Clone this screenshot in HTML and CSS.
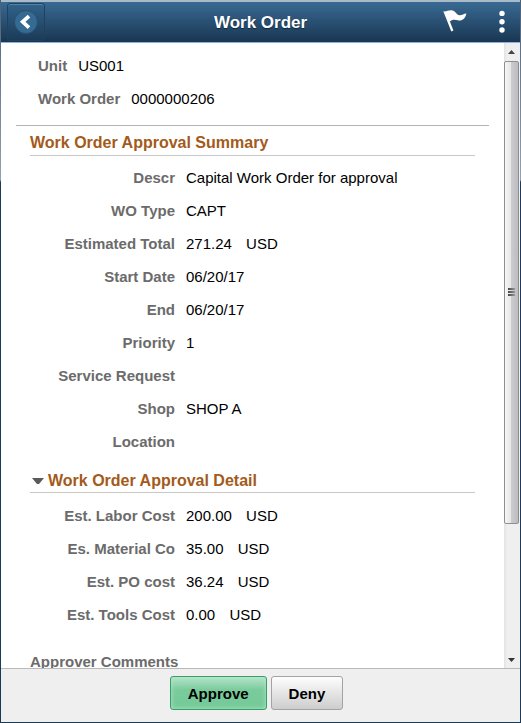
FILE: index.html
```
<!DOCTYPE html>
<html lang="en">
<head>
<meta charset="utf-8">
<meta name="viewport" content="width=device-width, initial-scale=1">
<title>Work Order</title>
<link rel="stylesheet" href="styles.css">
</head>
<body>
<div class="window">
  <header class="banner">
    <button type="button" class="back" aria-label="Back">
      <svg width="24" height="24" viewBox="0 0 24 24">
        <circle cx="12" cy="12" r="11.5" fill="#356a92" stroke="#28516f"/>
        <path d="M15 6.2L8.7 11.8L15 17.6" fill="none" stroke="#fff" stroke-width="3.8"/>
      </svg>
    </button>
    <h1>Work Order</h1>
    <div class="tools">
      <button type="button" class="tool" aria-label="Notifications">
        <svg width="24" height="24" viewBox="0 0 24 24">
          <path d="M0.3 1.3C3.6 2 5.6 -0.4 9.6 0.6C13.3 1.8 13.4 5.2 16.6 5.2C19.3 5.3 20.5 3.4 23.4 3.4C22.5 8.2 19.2 10.9 15.8 10.4C12.3 9.8 9.3 8.8 6.9 11.5L10.4 20.6L8.3 21.4Z" fill="#fff"/>
        </svg>
      </button>
      <button type="button" class="tool" aria-label="Actions">
        <svg width="6" height="24" viewBox="0 0 6 24">
          <circle cx="3" cy="3.4" r="2.7" fill="#fff"/>
          <circle cx="3" cy="11.7" r="2.7" fill="#fff"/>
          <circle cx="3" cy="20" r="2.7" fill="#fff"/>
        </svg>
      </button>
    </div>
  </header>

  <div class="middle">
    <main class="content">
      <dl class="keys">
        <div><dt>Unit</dt><dd>US001</dd></div>
        <div><dt>Work Order</dt><dd>0000000206</dd></div>
      </dl>
      <section class="group">
        <h2>Work Order Approval Summary</h2>
        <dl class="fields">
          <dt>Descr</dt><dd>Capital Work Order for approval</dd>
          <dt>WO Type</dt><dd>CAPT</dd>
          <dt>Estimated Total</dt><dd>271.24 <span class="cur">USD</span></dd>
          <dt>Start Date</dt><dd>06/20/17</dd>
          <dt>End</dt><dd>06/20/17</dd>
          <dt>Priority</dt><dd>1</dd>
          <dt>Service Request</dt><dd></dd>
          <dt>Shop</dt><dd>SHOP A</dd>
          <dt>Location</dt><dd></dd>
        </dl>
      </section>
      <section class="group detail">
        <h2>
          <button type="button" class="toggle" aria-expanded="true">
            <svg width="12" height="6" viewBox="0 0 12 6"><path d="M0 0H12L7 6H5Z" fill="#5a5a5a"/></svg>
            Work Order Approval Detail
          </button>
        </h2>
        <dl class="fields">
          <dt>Est. Labor Cost</dt><dd>200.00 <span class="cur">USD</span></dd>
          <dt>Es. Material Co</dt><dd>35.00 <span class="cur">USD</span></dd>
          <dt>Est. PO cost</dt><dd>36.24 <span class="cur">USD</span></dd>
          <dt>Est. Tools Cost</dt><dd>0.00 <span class="cur">USD</span></dd>
        </dl>
        <dl class="fields comments">
          <dt>Approver Comments</dt><dd></dd>
        </dl>
      </section>
    </main>
    <div class="scroll" aria-hidden="true">
      <svg class="arrow" width="15" height="18" viewBox="0 0 15 18"><path d="M4 11H11L7.5 7Z" fill="#444"/></svg>
      <div class="thumb"><i></i><i></i><i></i></div>
      <div class="rest"></div>
      <svg class="arrow" width="15" height="18" viewBox="0 0 15 18"><path d="M4 8H11L7.5 12Z" fill="#333"/></svg>
    </div>
  </div>

  <footer class="actions">
    <button type="button" class="btn approve">Approve</button>
    <button type="button" class="btn">Deny</button>
  </footer>
</div>
</body>
</html>
```
FILE: styles.css
```
* { box-sizing:border-box;}
body { margin:0; font-family:"Liberation Sans", Arial, sans-serif; font-size:15px; color:#000;}
h1, h2, dl, dd { margin:0;}
button { font-family:inherit; cursor:pointer;}
svg { display:block;}

.window { display:flex; flex-direction:column; height:100vh; padding:0 1px 1px; background:linear-gradient(#4c6076, #93a1b0 180px, #1c3a55 182px);}

/* banner */
.banner { display:grid; grid-template-columns:1fr auto 1fr; align-items:center; height:43px; flex:none; padding:0 6px; border-top:2px solid #a9bac8; border-bottom:1px solid #8db2dc; background:linear-gradient(#396a93, #193652);}
.banner h1 { font-size:17px; line-height:20px; color:#fff; padding-top:2px; text-shadow:0 1px 1px #10263a;}
.back { display:flex; align-items:center; justify-content:center; width:38px; height:38px; padding:0; border:1px solid #1f4260; border-radius:3px; background:linear-gradient(#32628a, #1b3b58); box-shadow:inset 0 1px 0 #5383a8;}
.tools { display:flex; justify-content:flex-end; gap:32px; padding-right:9px;}
.tool { padding:0; border:none; background:none;}

/* page body */
.middle { display:flex; flex:1; min-height:0; background:#fff;}
.content { flex:1; overflow-y:auto; scrollbar-width:none; padding:6px 15px 0;}
dt { font-weight:bold; color:#6b6b6b;}
.keys { padding:0 22px 10px; border-bottom:1px solid #b5b5b5;}
.keys div { display:flex; gap:11px; line-height:33px;}
.group { padding:0 14px;}
.group h2 { padding:7px 0 2px; border-bottom:1px solid #c8c8c8; font-size:16px; line-height:20px; color:#a35a1a;}
.detail h2 { padding-top:13px; padding-bottom:1px;}
.toggle { display:flex; align-items:center; gap:4px; padding:0 0 0 2px; border:none; background:none; font-size:16px; font-weight:bold; line-height:20px; color:inherit;}
.fields { display:grid; grid-template-columns:145px 1fr; column-gap:11px; padding-top:5px; line-height:33px;}
.detail .fields { padding-top:6px;}
.fields dt { text-align:right; white-space:nowrap;}
.fields dt, .fields dd { min-height:33px;}
.cur { margin-left:10px;}
.detail .comments { padding-top:14px;}

/* scrollbar */
.scroll { display:flex; flex-direction:column; flex:none; width:16px; padding-right:1px; background:linear-gradient(90deg, #e3e3e3, #efefef 3px);}
.arrow { flex:none;}
.thumb { flex:463; display:flex; flex-direction:column; align-items:center; justify-content:center; gap:1px; border:1px solid #8f8f8f; border-radius:2px; background:linear-gradient(90deg, #f6f6f6, #e6e6e6 45%, #cbcbcf 50%, #bcbcc0);}
.thumb i { width:7px; height:2px; background:linear-gradient(90deg, #444, #999);}
.rest { flex:127;}

/* buttons at the bottom */
.actions { display:flex; flex:none; justify-content:center; gap:4px; padding:7px 16px 12px 8px; border-top:1px solid #b9b9b9; background:#efefef;}
.btn { height:34px; padding:0 17px; border:1px solid #a3a3a3; border-radius:3px; background:linear-gradient(#fdfdfd, #cdcdcd); font-size:15px; font-weight:bold; color:#000;}
.approve { border-color:#35a065; background:linear-gradient(#b5e3c8, #7acb9c 40%, #74c997); box-shadow:inset 0 0 5px #b5e5c9;}
```
